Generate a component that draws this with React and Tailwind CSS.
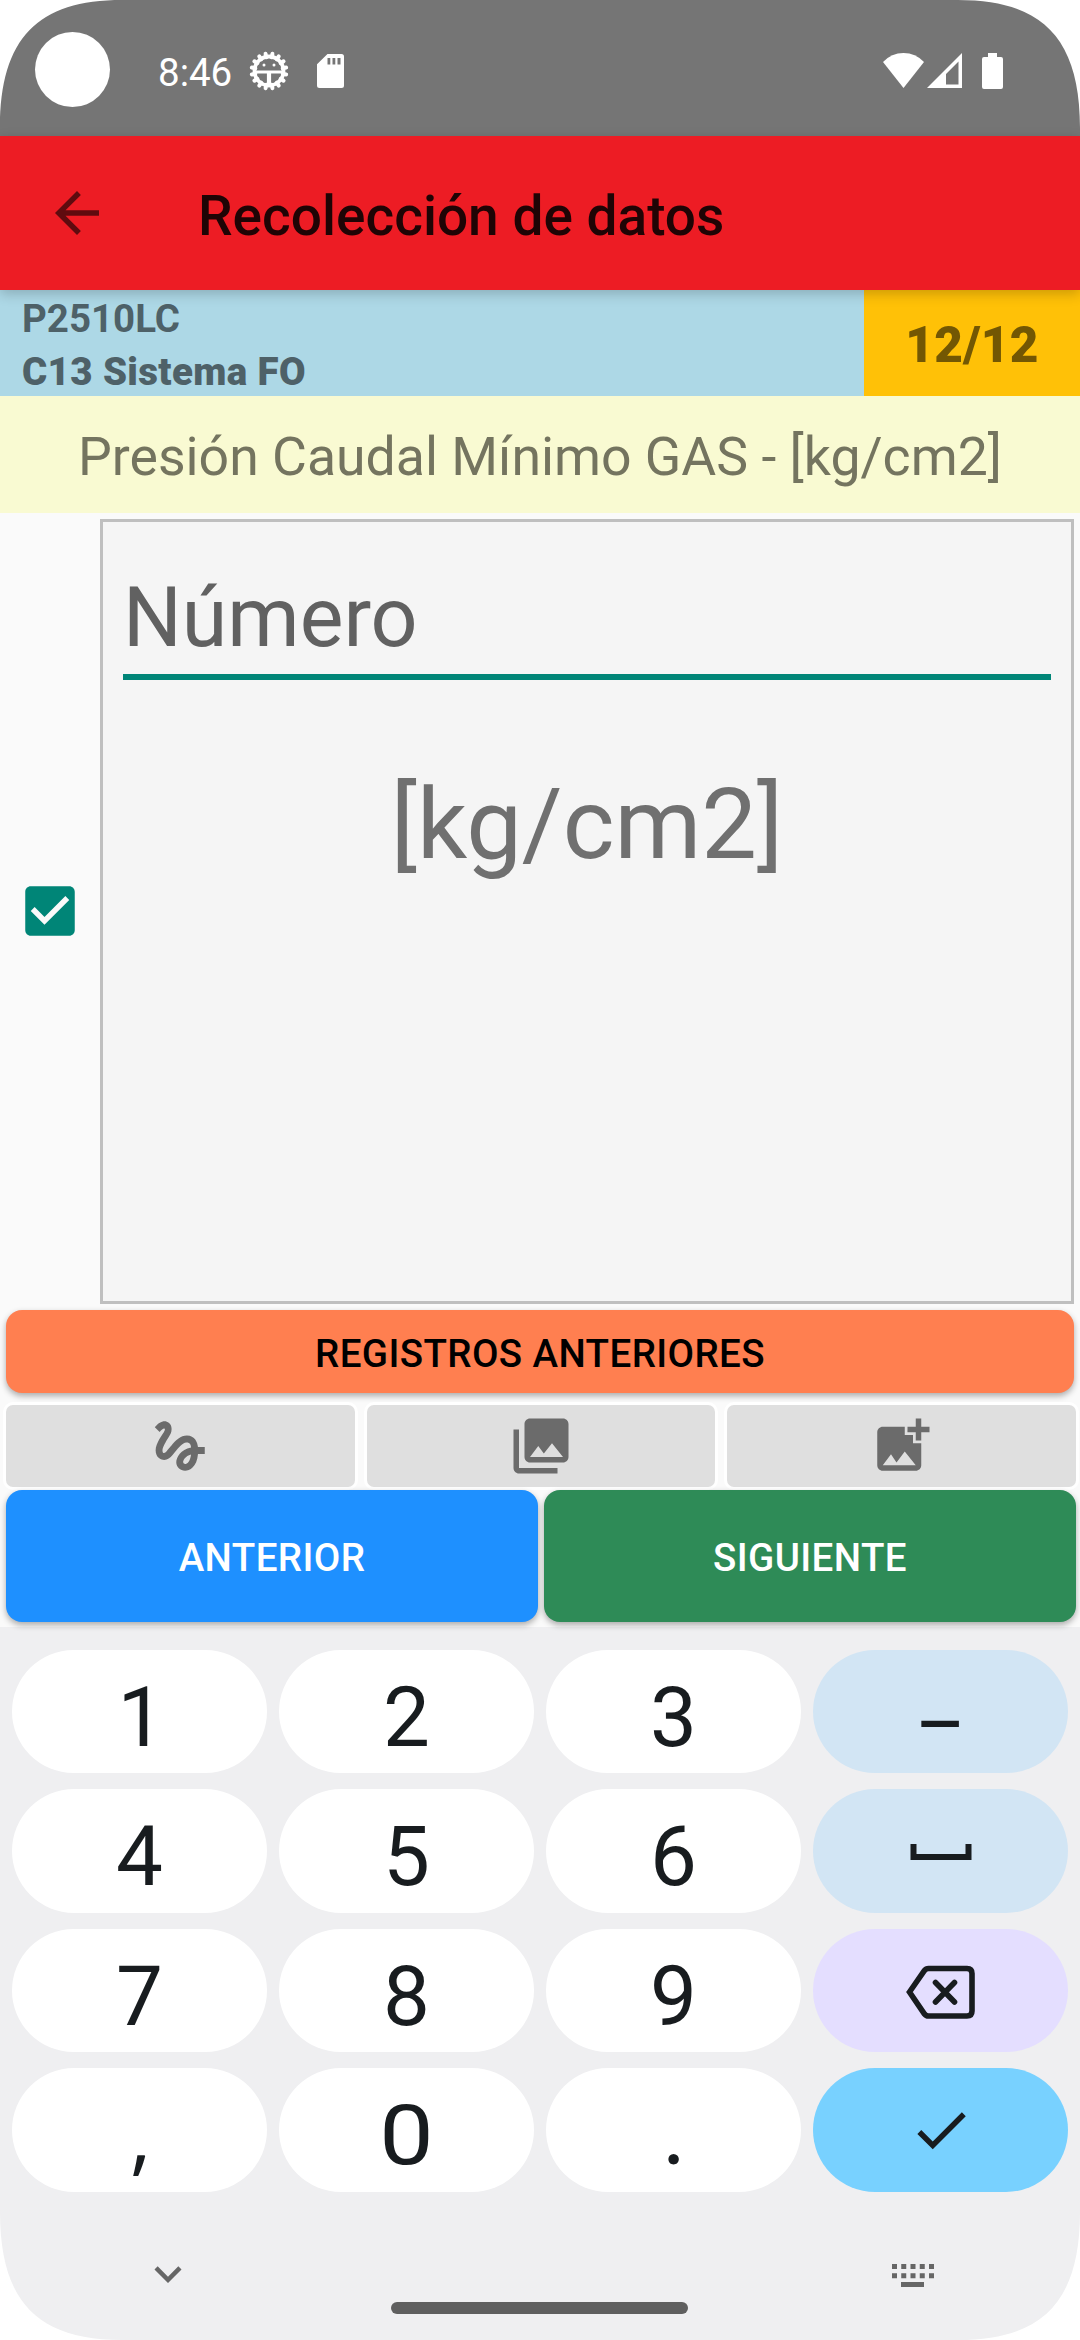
import React from "react";

const gear = Array.from({ length: 16 }, (_, i) => i * 22.5);

function Corner({ className }) {
  return (
    <svg className={className} width="122" height="128" viewBox="0 0 122 128">
      <path d="M0 0H122C38 0 0 38 0 128Z" fill="#fff" />
    </svg>
  );
}

function Icon({ size = 66, children, className = "" }) {
  return (
    <svg width={size} height={size} viewBox="0 0 24 24" fill="currentColor" className={className}>
      {children}
    </svg>
  );
}

function StatusBar() {
  return (
    <header className="flex h-[136px] bg-[#757575] text-white">
      <div className="mt-8 ml-[35px] size-[75px] rounded-full bg-white" />
      <div className="mt-[50px] ml-[48px] w-[90px] text-[38.5px] leading-[46px]">8:46</div>
      <svg className="mt-[51px] ml-[1px]" width="40" height="40" viewBox="-20 -20 40 40">
        <g stroke="#fff" fill="none">
          {gear.map((a) => (
            <path key={a} d="M0 -14V-17.500" strokeWidth="4" strokeLinecap="round" transform={`rotate(${a + 11.25})`} />
          ))}
          <circle r="14.500" strokeWidth="3.800" />
          <path d="M-14 1H14" strokeWidth="3" />
          <path d="M0 1V14" strokeWidth="4.200" />
        </g>
        <circle cx="-5" cy="-6" r="1.500" fill="#fff" />
        <circle cx="5" cy="-6" r="1.500" fill="#fff" />
      </svg>
      <svg className="mt-[54px] ml-[28px]" width="27" height="34" viewBox="0 0 27 34">
        <path fillRule="evenodd" fill="#fff" d="M10.5 0H24.500Q27 0 27 2.500V31.500Q27 34 24.500 34H2.500Q0 34 0 31.500V10.300ZM10.500 4V10.500H13.300V4ZM15.500 4V10.500H18.300V4ZM20.500 4V10.500H23.500V4Z" />
      </svg>
      <svg className="mt-[53px] ml-auto" width="41" height="35" viewBox="0 0 41 35">
        <path fill="#fff" d="M0 9Q8.500 0 20.500 0T41 9L20.500 35Z" />
      </svg>
      <svg className="mt-[53px] ml-[3px]" width="35" height="35" viewBox="0 0 35 35">
        <path fillRule="evenodd" fill="#fff" d="M0 35L35 0V35ZM19 21V31.500H31.500V8.500Z" />
      </svg>
      <svg className="mt-[53px] mr-[77px] ml-[20px]" width="21" height="36" viewBox="0 0 21 36">
        <path fill="#fff" d="M6 0H15V4H19Q21 4 21 6V34Q21 36 19 36H2Q0 36 0 34V6Q0 4 2 4H6Z" />
      </svg>
    </header>
  );
}

function AppBar() {
  return (
    <div className="relative flex h-[154px] items-start bg-[#ed1c24] shadow-[0_4px_12px_rgba(0,0,0,0.2)]">
      <Icon className="mt-11 ml-11 text-[#5f0b0f]">
        <path d="M20 11H7.830l5.590-5.590L12 4l-8 8 8 8 1.410-1.410L7.830 13H20v-2z" />
      </Icon>
      <h1 className="mt-[47px] ml-[88px] text-[55px] leading-[66px] font-medium text-[#1f0405]">Recolección de datos</h1>
    </div>
  );
}

function RecordInfo() {
  return (
    <>
      <div className="flex h-[106px]">
        <div className="w-[864px] bg-[#add8e6] pt-[2px] pl-[22px] text-[38.5px] leading-[53px] text-[#4e6168]">
          <div className="font-bold">P2510LC</div>
          <div className="font-black tracking-[0.35px]">C13 Sistema FO</div>
        </div>
        <div className="flex flex-1 items-center justify-center bg-[#ffc107] pt-1 text-[49.5px] leading-[58px] font-black tracking-[0.3px] text-[#735703]">12/12</div>
      </div>
      <div className="h-[117px] bg-[#f9fad2] pt-[28px] text-center text-[53.6px] leading-[66px] text-[#74745f]">
        Presión Caudal Mínimo GAS - [kg/cm2]
      </div>
    </>
  );
}

function ValueForm() {
  return (
    <div className="flex h-[797px] pt-[6px] pr-[6px] pb-[6px]">
      <div className="flex w-[100px] items-center justify-center pb-[2px]">
        <Icon className="text-[#008577]">
          <path d="M19 3H5c-1.110 0-2 .9-2 2v14c0 1.100.890 2 2 2h14c1.110 0 2-.9 2-2V5c0-1.100-.890-2-2-2zm-9 14l-5-5 1.410-1.410L10 14.170l7.590-7.590L19 8l-9 9z" />
        </Icon>
      </div>
      <div className="flex-1 border-[3px] border-[#bfbfbf] bg-[#f5f5f5] px-5">
        <div className="h-[158px] border-b-[6px] border-[#008577] pt-[47px] text-[82.5px] leading-[98px] text-[#616161]">Número</div>
        <div className="pt-[86px] text-center text-[99px] leading-[116px] text-[#707070]">[kg/cm2]</div>
      </div>
    </div>
  );
}

const tools = [
  "M4.590 6.890c.7-.71 1.400-1.350 1.710-1.220.5.2 0 1.030-.3 1.520-.25.420-2.860 3.890-2.860 6.310 0 1.280.480 2.340 1.340 2.980.750.560 1.740.730 2.640.460 1.070-.310 1.950-1.400 3.060-2.770 1.210-1.490 2.830-3.440 4.080-3.440 1.630 0 1.650 1.010 1.760 1.790-3.780.640-5.380 3.670-5.380 5.370 0 1.700 1.440 3.090 3.210 3.090 1.630 0 4.290-1.330 4.690-6.100H21v-2.500h-2.470c-.150-1.650-1.090-4.200-4.030-4.200-2.250 0-4.180 1.910-4.940 2.840-.580.730-2.060 2.480-2.290 2.720-.250.300-.680.840-1.110.840-.450 0-.720-.830-.360-1.920.350-1.090 1.400-2.860 1.850-3.520.780-1.140 1.300-1.920 1.300-3.280C8.950 3.690 7.310 3 6.440 3 5.120 3 3.970 4 3.720 4.250c-.360.360-.660.660-.880.930l1.750 1.710zm9.290 11.660c-.310 0-.740-.260-.740-.720 0-.6.730-2.200 2.870-2.760-.3 2.690-1.430 3.480-2.130 3.480z",
  "M22 16V4c0-1.100-.9-2-2-2H8c-1.100 0-2 .9-2 2v12c0 1.100.9 2 2 2h12c1.100 0 2-.9 2-2zm-11-4l2.030 2.710L16 11l4 5H8l3-4zM2 6v14c0 1.100.9 2 2 2h14v-2H4V6H2z",
  "M19 7v2.990s-1.990.010-2 0V7h-3s.010-1.990 0-2h3V2h2v3h3v2h-3zm-3 4V8h-3V5H5c-1.100 0-2 .9-2 2v12c0 1.100.9 2 2 2h12c1.100 0 2-.9 2-2v-8h-3zM5 19l3-4 2 3 3-4 4 5H5z",
];

function Actions() {
  const raised = "shadow-[0_3px_6px_rgba(0,0,0,0.32)]";
  return (
    <div className="h-[317px] text-[38.5px] font-medium tracking-[0.4px]">
      <button className="mr-[6px] ml-[6px] flex h-[83px] w-[1068px] items-center justify-center rounded-[16px] bg-[#ff7f50] pt-[4px] text-black shadow-[0_3px_6px_rgba(0,0,0,0.32)]">
        REGISTROS ANTERIORES
      </button>
      <div className="mt-[12px] grid grid-cols-3 gap-[12px] pr-[4px] pl-[6px]">
        {tools.map((d) => (
          <button key={d} className="flex h-[82px] items-center justify-center rounded-[7px] bg-[#dfdfdf] text-[#6b6b6b] shadow-[0_0_0_3px_#fff]">
            <Icon><path d={d} /></Icon>
          </button>
        ))}
      </div>
      <div className="relative mt-[3px] grid grid-cols-2 gap-[6px] pr-[4px] pl-[6px] text-white">
        <button className={`h-[132px] rounded-[16px] bg-[#1e90ff] pt-[3px] ${raised}`}>ANTERIOR</button>
        <button className={`h-[132px] rounded-[16px] bg-[#2e8b57] pt-[3px] ${raised}`}>SIGUIENTE</button>
      </div>
    </div>
  );
}

const white = "bg-white";
const keys = [
  ["1", white], ["2", white], ["3", white], ["–", "bg-[#d2e5f4]"],
  ["4", white], ["5", white], ["6", white], ["space", "bg-[#d2e5f4]"],
  ["7", white], ["8", white], ["9", white], ["back", "bg-[#e4deff]"],
  [",", white], ["0", white], [".", white], ["enter", "bg-[#78d1ff]"],
];

function KeyFace({ name }) {
  if (name === "space")
    return (
      <svg width="62" height="16" viewBox="0 0 62 16" className="mt-[2px]">
        <path d="M3.500 0V13H58.500V0" fill="none" stroke="currentColor" strokeWidth="6" />
      </svg>
    );
  if (name === "back")
    return (
      <svg width="70" height="56" viewBox="0 0 70 56" className="mt-[5px]" fill="none" stroke="currentColor" strokeWidth="5.600">
        <path d="M3.500 26.500L18.500 5Q20 3 22.500 3H61Q66 3 66 8V45.500Q66 50.500 61 50.500H22.500Q20 50.500 18.500 48.500Z" transform="translate(0 .5)" />
        <path d="M29.500 17.500L48.500 37M48.500 17.500L29.500 37" strokeLinecap="round" />
      </svg>
    );
  if (name === "enter")
    return (
      <Icon>
        <path d="M9 16.170L4.830 12l-1.420 1.410L9 19 21 7l-1.410-1.410L9 16.170z" />
      </Icon>
    );
  if (name === "0") return <span className="scale-x-[1.16] pt-[12px]">0</span>;
  if (name === "1") return <span className="pt-[12px] pl-[3px]">1</span>;
  if (name === ".") return <span className="pt-[6px] font-['Lato']">.</span>;
  if (name === ",") return <span className="pt-[5px] pl-[2px] font-['Open_Sans']">,</span>;
  if (name === "–") return <span className="scale-x-[0.92] pt-[28px]">–</span>;
  return <span className="pt-[12px]">{name}</span>;
}

function Keyboard() {
  return (
    <div className="flex-1 bg-[#efeff1] pt-[23px] text-[#181c1f]">
      <div className="grid grid-cols-4 gap-x-[12px] gap-y-[16px] px-[12px]">
        {keys.map(([name, color]) => (
          <button key={name} className={`flex h-[123.4px] items-center justify-center rounded-[62px] text-[83.5px] leading-none ${color}`}>
            <KeyFace name={name} />
          </button>
        ))}
      </div>
      <div className="flex h-[147px] items-start pt-px pl-[141px] text-[#666]">
        <Icon size={54} className="mt-[54px]">
          <path d="M7.410 8.590L12 13.170l4.590-4.580L18 10l-6 6-6-6z" />
        </Icon>
        <div className="mt-[109px] ml-[196px] h-[12px] w-[297px] rounded-full bg-[#5f5f5f]" />
        <svg className="mt-[71px] ml-[204px]" width="42" height="23" viewBox="0 0 42 23">
          <path d="M0 2.500H42M0 11.800H42" stroke="currentColor" strokeWidth="5" strokeDasharray="5 4.250" />
          <path d="M9 20.500H32" stroke="currentColor" strokeWidth="5" />
        </svg>
      </div>
    </div>
  );
}

export default function App() {
  return (
    <div className="relative flex h-[2340px] w-[1080px] flex-col overflow-hidden bg-[#fafafa] font-['Roboto',sans-serif]">
      <StatusBar />
      <AppBar />
      <RecordInfo />
      <ValueForm />
      <Actions />
      <Keyboard />
      <Corner className="absolute top-0 left-0" />
      <Corner className="absolute top-0 right-0 -scale-x-100" />
      <Corner className="absolute bottom-0 left-0 -scale-y-100" />
      <Corner className="absolute right-0 bottom-0 rotate-180" />
    </div>
  );
}
